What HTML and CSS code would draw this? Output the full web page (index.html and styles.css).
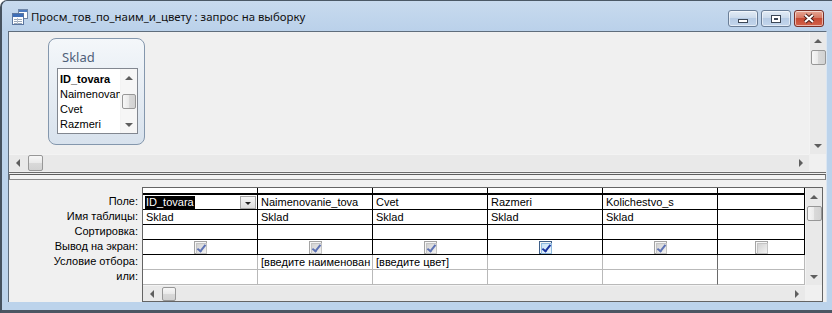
FILE: index.html
```html
<!DOCTYPE html>
<html lang="ru">
<head>
  <meta charset="UTF-8" />
  <title>Просм_тов_по_наим_и_цвету : запрос на выборку</title>
  <link rel="stylesheet" href="styles.css">
</head>
<body>

  <div class="window">
    <div class="titlebar">
      <svg class="app-icon" width="16" height="16" viewBox="0 0 16 16">
        <rect x="6.5" y="0.5" width="9" height="9" fill="#fff" stroke="#6f86a8"/>
        <rect x="7" y="1" width="8" height="2" fill="#4f7cc0"/>
        <rect x="0.5" y="4.5" width="11" height="11" fill="#fff" stroke="#5b76a0"/>
        <rect x="1" y="5" width="10" height="3" fill="#3f6fb8"/>
        <path d="M2 10.5h8M2 12.5h8M2 14.5h8" stroke="#9aa8ba"/>
        <path d="M5.5 9v6" stroke="#b5c0cd"/>
      </svg>
      <span class="title">Просм_тов_по_наим_и_цвету : запрос на выборку</span>
      <div class="caption-buttons">
        <div class="cap">
          <svg width="12" height="6" viewBox="0 0 12 6"><rect x="1.5" y="1.5" width="9" height="3" fill="#fff" stroke="#3c4756"/></svg>
        </div>
        <div class="cap">
          <svg width="12" height="10" viewBox="0 0 12 10"><rect x="1.5" y="1.5" width="9" height="7" fill="none" stroke="#3c4756"/><rect x="3" y="3" width="6" height="4" fill="none" stroke="#fff" stroke-width="2"/><rect x="4.5" y="4.5" width="3" height="1" fill="none" stroke="#3c4756"/></svg>
        </div>
        <div class="cap close">
          <svg width="14" height="11" viewBox="0 0 14 11"><path d="M3 2l8 7M11 2l-8 7" stroke="#4a1d18" stroke-width="4"/><path d="M3 2l8 7M11 2l-8 7" stroke="#fff" stroke-width="2"/></svg>
        </div>
      </div>
    </div>

    <div class="client">
      <!-- table area -->
      <div class="design-pane">
        <div class="pane-row">
          <div class="canvas">
            <div class="table-box">
              <div class="table-name">Sklad</div>
              <div class="field-list">
                <ul class="fields">
                  <li class="key">ID_tovara</li>
                  <li>Naimenovanie_tovara</li>
                  <li>Cvet</li>
                  <li>Razmeri</li>
                </ul>
                <div class="vscroll list-scroll">
                  <div class="sb-btn"><span class="arr-up"></span></div>
                  <div class="thumb-v list-thumb"></div>
                  <div class="sb-track"></div>
                  <div class="sb-btn"><span class="arr-down"></span></div>
                </div>
              </div>
            </div>
          </div>
          <div class="vscroll">
            <div class="sb-btn"><span class="arr-up"></span></div>
            <div class="thumb-v"></div>
            <div class="sb-track"></div>
            <div class="sb-btn"><span class="arr-down"></span></div>
          </div>
        </div>
        <div class="hscroll-row">
          <div class="hscroll wide">
            <div class="sb-btn"><span class="arr-left"></span></div>
            <div class="thumb-h"></div>
            <div class="sb-track"></div>
            <div class="sb-btn"><span class="arr-right"></span></div>
          </div>
          <div class="corner"></div>
        </div>
      </div>

      <div class="splitter"><div class="splitter-bar"></div></div>

      <!-- query grid -->
      <div class="grid-pane">
        <div class="row-labels">
          <div>Поле:</div>
          <div>Имя таблицы:</div>
          <div>Сортировка:</div>
          <div>Вывод на экран:</div>
          <div>Условие отбора:</div>
          <div>или:</div>
        </div>
        <div class="qbe">
          <div class="qbe-main">
            <div class="qbe-cells">
              <div class="hd"></div><div class="hd"></div><div class="hd"></div><div class="hd"></div><div class="hd"></div><div class="hd"></div>

              <div class="cell active"><span class="sel">ID_tovara</span><span class="drop"><span class="arr-down"></span></span></div>
              <div class="cell">Naimenovanie_tova</div>
              <div class="cell">Cvet</div>
              <div class="cell">Razmeri</div>
              <div class="cell">Kolichestvo_s</div>
              <div class="cell"></div>

              <div class="cell">Sklad</div>
              <div class="cell">Sklad</div>
              <div class="cell">Sklad</div>
              <div class="cell">Sklad</div>
              <div class="cell">Sklad</div>
              <div class="cell"></div>

              <div class="cell"></div><div class="cell"></div><div class="cell"></div><div class="cell"></div><div class="cell"></div><div class="cell"></div>

              <div class="cell check"><span class="chk on"></span></div>
              <div class="cell check"><span class="chk on"></span></div>
              <div class="cell check"><span class="chk on"></span></div>
              <div class="cell check"><span class="chk on hot"></span></div>
              <div class="cell check"><span class="chk on"></span></div>
              <div class="cell check"><span class="chk"></span></div>

              <div class="cell light"></div>
              <div class="cell light">[введите наименован</div>
              <div class="cell light">[введите цвет]</div>
              <div class="cell light"></div>
              <div class="cell light last-field"></div>
              <div class="cell light"></div>

              <div class="cell light"></div>
              <div class="cell light"></div>
              <div class="cell light"></div>
              <div class="cell light"></div>
              <div class="cell light last-field"></div>
              <div class="cell light"></div>
            </div>
            <div class="vscroll">
              <div class="sb-btn"><span class="arr-up"></span></div>
              <div class="thumb-v"></div>
              <div class="sb-track"></div>
              <div class="sb-btn"><span class="arr-down"></span></div>
            </div>
          </div>
          <div class="hscroll-row">
            <div class="hscroll grid-h">
              <div class="sb-btn"><span class="arr-left"></span></div>
              <div class="thumb-h"></div>
              <div class="sb-track"></div>
              <div class="sb-btn"><span class="arr-right"></span></div>
            </div>
            <div class="corner"></div>
          </div>
        </div>
      </div>
    </div>
  </div>

</body>
</html>
```

FILE: styles.css
```css
:root {
  --frame: #bcd3eb;
  --face: #f0f0f0;
  --track: #e9e9e9;
  --arrow: #5e5e5e;
  --ui-font: 'Liberation Sans', Arial, sans-serif;
  --title-font: 'Noto Sans', 'Open Sans', sans-serif;
}

* {
  box-sizing: border-box;
}

body {
  margin: 0;
  background: #fff;
  font-family: var(--ui-font);
  font-size: 11px;
  color: #000;
}

.window {
  width: 832px;
  height: 313px;
  background: var(--frame);
  border-top: 1px solid #4b5866;
  border-left: 2px solid #46525f;
  border-bottom: 3px solid #4c5663;
  border-top-left-radius: 7px;
  display: flex;
  flex-direction: column;
}

/* title bar */
.titlebar {
  height: 30px;
  flex: none;
  display: flex;
  align-items: center;
  padding-left: 10px;
  background: linear-gradient(to bottom, #c8daee, #bad1ea);
  border-top-left-radius: 6px;
}

.app-icon {
  flex: none;
  margin-top: 2px;
}

.title {
  margin-left: 3px;
  margin-top: 1px;
  font-family: var(--title-font);
  font-size: 11.4px;
  color: #111;
  white-space: nowrap;
}

.caption-buttons {
  margin-left: auto;
  margin-right: 8px;
  align-self: flex-start;
  margin-top: 9px;
  display: flex;
  gap: 3px;
}

.cap {
  width: 30px;
  height: 17px;
  border: 1px solid #6a7e97;
  border-radius: 3px;
  background: linear-gradient(to bottom, #e3ecf6, #ccdbec 45%, #b6cbe4 50%, #c3d6ec);
  box-shadow: inset 0 0 0 1px rgba(255, 255, 255, 0.55);
  display: flex;
  align-items: center;
  justify-content: center;
}

.cap:first-child svg {
  margin-top: 5px;
}

.cap.close {
  border-color: #7a3028;
  background: linear-gradient(to bottom, #e8a794, #d67863 45%, #c64a33 50%, #d3624a);
}

/* client */
.client {
  margin-left: 6px;
  width: 819px;
  height: 271px;
  flex: none;
  border-top: 1px solid #5f6d7c;
  border-left: 1px solid #5f6d7c;
  border-right: 1px solid #dce6f1;
  background: var(--face);
  display: flex;
  flex-direction: column;
}

.design-pane {
  height: 139px;
  flex: none;
  display: flex;
  flex-direction: column;
}

.pane-row {
  height: 122px;
  display: flex;
}

.canvas {
  flex: 1;
  background: var(--face);
  overflow: hidden;
}

/* table field list */
.table-box {
  width: 97px;
  height: 107px;
  margin: 6px 0 0 39px;
  padding: 0 6px 0 8px;
  border: 1px solid #8497ad;
  border-radius: 8px;
  background: linear-gradient(to bottom, #f4f7fa, #d8e2ed);
}

.table-name {
  padding: 10px 0 0 5px;
  height: 29px;
  line-height: 16px;
  font-family: var(--title-font);
  font-size: 13px;
  color: #4f5f79;
}

.field-list {
  width: 81px;
  height: 66px;
  border: 1px solid #828790;
  background: #fff;
  display: flex;
}

.fields {
  flex: 1;
  list-style: none;
  margin: 0;
  padding: 3px 0 0 2px;
  overflow: hidden;
  white-space: nowrap;
}

.fields li {
  height: 15px;
  line-height: 15px;
  overflow: hidden;
}

.fields li.key {
  font-weight: bold;
}

/* scrollbars */
.vscroll {
  width: 17px;
  flex: none;
  display: flex;
  flex-direction: column;
  background: var(--track);
  border-left: 1px solid #f3f3f3;
}

.list-scroll {
  background: #f6f6f6;
}

.hscroll {
  height: 17px;
  display: flex;
  background: var(--track);
  border-top: 1px solid #f3f3f3;
}

.hscroll.wide {
  width: 800px;
}

.hscroll.grid-h {
  width: 662px;
  height: 16px;
}

.hscroll-row {
  display: flex;
  flex: none;
}

.corner {
  flex: 1;
  background: var(--face);
}

.sb-btn {
  flex: none;
  height: 17px;
  display: flex;
  align-items: center;
  justify-content: center;
}

.hscroll .sb-btn {
  width: 17px;
  height: auto;
}

.sb-track {
  flex: 1;
}

.thumb-v {
  width: 15px;
  height: 15px;
  margin: 1px 0 0 1px;
  border: 1px solid #979797;
  border-radius: 2px;
  background: linear-gradient(to right, #f7f7f7, #e9e9e9 50%, #d9d9d9 50%, #d2d2d2);
  flex: none;
}

.list-thumb {
  margin-top: 8px;
  width: 14px;
}

.thumb-h {
  width: 15px;
  margin: 0 0 0 2px;
  border: 1px solid #979797;
  border-radius: 2px;
  background: linear-gradient(to bottom, #f7f7f7, #e9e9e9 50%, #d9d9d9 50%, #d2d2d2);
  flex: none;
}

.grid-h .thumb-h {
  width: 14px;
  margin-top: 1px;
}

.arr-up,
.arr-down {
  width: 0;
  height: 0;
  border-left: 4px solid transparent;
  border-right: 4px solid transparent;
}

.arr-up {
  border-bottom: 4px solid var(--arrow);
}

.arr-down {
  border-top: 4px solid var(--arrow);
}

.arr-left,
.arr-right {
  width: 0;
  height: 0;
  border-top: 4px solid transparent;
  border-bottom: 4px solid transparent;
}

.arr-left {
  border-right: 4px solid var(--arrow);
}

.arr-right {
  border-left: 4px solid var(--arrow);
}

/* splitter */
.splitter {
  height: 9px;
  flex: none;
  margin-top: 1px;
  border-top: 1px solid #6d6d6d;
}

.splitter-bar {
  margin-top: 1px;
  height: 6px;
  border: 1px solid #7c7c7c;
  border-top-color: #5e5e5e;
  border-bottom-color: #8a8a8a;
  background: #f4f4f4;
}

/* query grid */
.grid-pane {
  flex: 1;
  display: flex;
  padding-top: 6px;
}

.row-labels {
  width: 133px;
  padding: 7px 4px 0 0;
  text-align: right;
  white-space: nowrap;
}

.row-labels div {
  height: 15px;
  line-height: 15px;
}

.qbe {
  width: 681px;
  height: 115px;
  border: 1px solid #646464;
  background: #fff;
  display: flex;
  flex-direction: column;
}

.qbe-main {
  height: 97px;
  display: flex;
}

.qbe-cells {
  width: 662px;
  display: grid;
  grid-template-columns: repeat(5, 115px) 1fr;
  grid-template-rows: 7px repeat(6, 15px);
}

.hd {
  border-right: 1px solid #000;
  border-bottom: 2px solid #000;
}

.cell {
  border-right: 1px solid #000;
  border-bottom: 1px solid #000;
  padding-left: 3px;
  line-height: 14px;
  white-space: nowrap;
  overflow: hidden;
}

.cell.light {
  border-color: #b9b9b9;
}

.cell.light.last-field {
  border-right: 1px solid #6a6a6a;
}

.cell.active {
  padding: 1px 1px 0 2px;
  display: flex;
  align-items: stretch;
}

.sel {
  background: #000;
  color: #fff;
  padding: 0 1px;
  line-height: 13px;
}

.drop {
  margin-left: auto;
  width: 16px;
  border: 1px solid #a6a6a6;
  background: linear-gradient(to bottom, #f5f5f5, #dedede);
  display: flex;
  align-items: center;
  justify-content: center;
  padding-top: 2px;
}

.drop .arr-down {
  border-left-width: 3px;
  border-right-width: 3px;
  border-top-width: 3px;
  border-top-color: #222;
}

.cell.check {
  display: flex;
  align-items: center;
  justify-content: center;
  padding: 0;
}

.chk {
  width: 13px;
  height: 13px;
  border: 1px solid #a4a4a4;
  background: #f6f6f6;
  padding: 1px;
  position: relative;
}

.chk::before {
  content: "";
  display: block;
  width: 100%;
  height: 100%;
  border: 1px solid #c4c4c4;
  background: linear-gradient(135deg, #d2d2d2, #f2f2f2);
}

.chk.on::after {
  content: "";
  position: absolute;
  left: 4px;
  top: 1px;
  width: 3px;
  height: 7px;
  border: solid #5d72b4;
  border-width: 0 2px 2px 0;
  transform: rotate(38deg);
}

.chk.hot {
  border-color: #3f5f88;
}

.chk.hot::before {
  border-color: #8fb9de;
  background: linear-gradient(135deg, #c6e1f7, #eef7fd);
}

.chk.hot::after {
  border-color: #1a34a0;
}
```
